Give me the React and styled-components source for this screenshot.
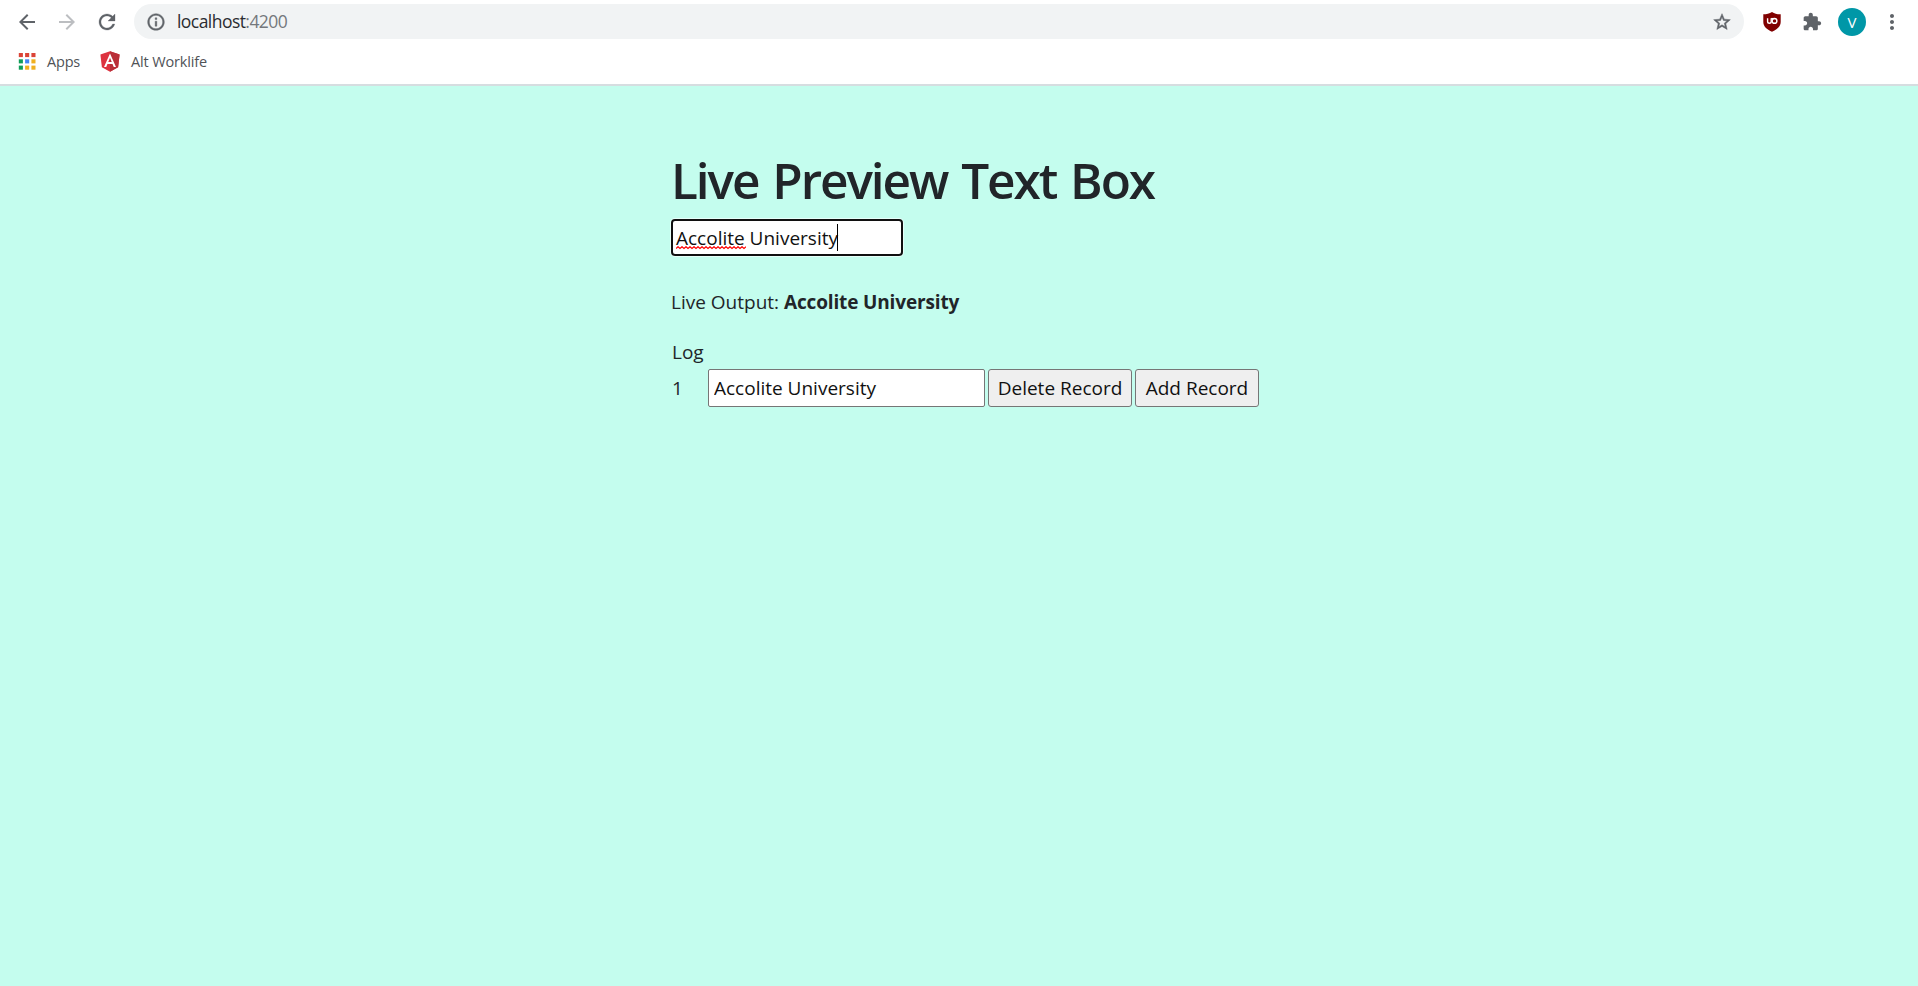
import React from "react";
import styled, { createGlobalStyle } from "styled-components";

const GlobalStyle = createGlobalStyle`
  * { box-sizing: border-box; }
  html, body { margin: 0; height: 100%; }
  body { background: #c4fdee; overflow: hidden; }
  #root { height: 100%; }
`;

const Window = styled.div`
  display: flex;
  flex-direction: column;
  height: 100%;
  font-family: "Open Sans", "Noto Sans", sans-serif;
  font-weight: 400;
  color: #212529;
`;

const Chrome = styled.header`
  flex: none;
  height: 86px;
  background: #fff;
  border-bottom: 2px solid #d6dde0;
`;

const Toolbar = styled.div`
  display: flex;
  align-items: center;
  height: 43px;
  padding: 0 14px;
`;

const IconSlot = styled.span`
  display: flex;
  align-items: center;
  justify-content: center;
  flex: none;
  width: ${(p) => p.$w || 40}px;
  height: 40px;
  color: ${(p) => p.$color || "#5f6368"};
  svg { display: block; }
`;

const AddressBar = styled.div`
  display: flex;
  align-items: center;
  width: 1610px;
  height: 35px;
  border-radius: 18px;
  background: #f1f3f4;
  padding: 0 12px;
`;

const Url = styled.span`
  flex: 1;
  margin-left: 11px;
  padding-bottom: 1px;
  font-size: 17.5px;
  line-height: 24px;
  letter-spacing: ${(p) => p.$spacing}px;
  color: #2b2c30;
`;

const Port = styled.span`
  color: #74787c;
`;

const Avatar = styled.span`
  display: flex;
  align-items: center;
  justify-content: center;
  width: 28px;
  height: 28px;
  border-radius: 50%;
  background: #0097a7;
  color: #fff;
  font-size: 15px;
  line-height: 20px;
`;

const Bookmarks = styled.nav`
  display: flex;
  align-items: center;
  height: 37px;
  padding-left: 18px;
`;

const Bookmark = styled.span`
  display: flex;
  align-items: center;
  gap: ${(p) => p.$gap}px;
  margin-right: 20px;
  font-size: 14.5px;
  line-height: 20px;
  letter-spacing: ${(p) => p.$spacing}px;
  color: #505357;
`;

const Main = styled.main`
  flex: 1;
  padding: 64px 0 0 671px;
  font-size: 19px;
  line-height: 30px;
`;

const Title = styled.h1`
  margin: 0;
  height: 69px;
  font-size: 49.5px;
  line-height: 60px;
  font-weight: 600;
  letter-spacing: ${(p) => p.$spacing}px;
  word-spacing: 3px;
  white-space: nowrap;
`;

const FocusedField = styled.div`
  position: relative;
  display: flex;
  align-items: center;
  width: 232px;
  height: 37px;
  padding-left: 3px;
  border: 2px solid #101010;
  border-radius: 4px;
  background: #fff;
  box-shadow: 0 0 0 1px #e6fff9;
  color: #111;
  letter-spacing: ${(p) => p.$spacing}px;
  white-space: nowrap;
`;

const Caret = styled.span`
  width: 1px;
  height: 27px;
  margin: 0 0 1px -1px;
  background: #000;
`;

const Squiggle = styled.svg`
  position: absolute;
  left: 3px;
  top: 25px;
`;

const Output = styled.p`
  margin: 31px 0 0;
  height: 50px;
  letter-spacing: ${(p) => p.$spacing}px;
`;

const Strong = styled.strong`
  font-weight: 700;
  letter-spacing: ${(p) => p.$spacing}px;
`;

const LogLabel = styled.div`
  height: 32px;
  padding-left: 1px;
`;

const LogRow = styled.div`
  display: flex;
  align-items: center;
  gap: 3px;
  height: 38px;
`;

const Index = styled.span`
  width: 34px;
  padding-left: 1px;
`;

const LogInput = styled.input`
  width: 277px;
  height: 38px;
  padding: 1px 4px 1px 5px;
  border: 1px solid #767676;
  border-radius: 2px;
  background: #fff;
  color: #111;
  font: inherit;
  letter-spacing: ${(p) => p.$spacing}px;
  outline: none;
`;

const Button = styled.button`
  width: ${(p) => p.$w}px;
  height: 38px;
  padding: 0;
  border: 1px solid #767676;
  border-radius: 3px;
  background: #efefef;
  color: #111;
  font: inherit;
  letter-spacing: ${(p) => p.$spacing}px;
  white-space: nowrap;
`;

const Glyph = ({ d, size = 24, weight = 0 }) => (
  <svg width={size} height={size} viewBox="0 0 24 24" fill="currentColor" stroke="currentColor" strokeWidth={weight}>
    <path d={d} />
  </svg>
);

const BACK = "M20 11H7.83l5.59-5.59L12 4l-8 8 8 8 1.41-1.41L7.83 13H20v-2z";
const FORWARD = "M12 4l-1.41 1.41L16.17 11H4v2h12.17l-5.58 5.59L12 20l8-8z";
const RELOAD =
  "M17.65 6.35C16.2 4.9 14.21 4 12 4c-4.42 0-7.99 3.58-7.99 8s3.57 8 7.99 8c3.73 0 6.84-2.55 7.73-6h-2.08c-.82 2.33-3.04 4-5.65 4-3.31 0-6-2.69-6-6s2.69-6 6-6c1.66 0 3.14.69 4.22 1.78L13 11h7V4l-2.35 2.35z";
const INFO =
  "M11 7h2v2h-2zm0 4h2v6h-2zm1-9C6.48 2 2 6.48 2 12s4.48 10 10 10 10-4.48 10-10S17.52 2 12 2zm0 18c-4.41 0-8-3.59-8-8s3.59-8 8-8 8 3.59 8 8-3.59 8-8 8z";
const STAR =
  "M22 9.24l-7.19-.62L12 2 9.19 8.63 2 9.24l5.46 4.73L5.82 21 12 17.27 18.18 21l-1.63-7.03L22 9.24zM12 15.4l-3.76 2.27 1-4.28-3.32-2.88 4.38-.38L12 6.1l1.71 4.04 4.38.38-3.32 2.88 1 4.28L12 15.4z";
const PUZZLE =
  "M20.5 11H19V7c0-1.1-.9-2-2-2h-4V3.5C13 2.12 11.88 1 10.5 1S8 2.12 8 3.5V5H4c-1.1 0-1.99.9-1.99 2v3.8H3.5c1.49 0 2.7 1.21 2.7 2.7s-1.21 2.7-2.7 2.7H2V20c0 1.1.9 2 2 2h3.8v-1.5c0-1.49 1.21-2.7 2.7-2.7s2.7 1.21 2.7 2.7V22H17c1.1 0 2-.9 2-2v-4h1.5c1.38 0 2.5-1.12 2.5-2.5S21.88 11 20.5 11z";
const MORE =
  "M12 8c1.1 0 2-.9 2-2s-.9-2-2-2-2 .9-2 2 .9 2 2 2zm0 2c-1.1 0-2 .9-2 2s.9 2 2 2 2-.9 2-2-.9-2-2-2zm0 6c-1.1 0-2 .9-2 2s.9 2 2 2 2-.9 2-2-.9-2-2-2z";

const ShieldIcon = () => (
  <svg width="18" height="20" viewBox="0 0 18 20">
    <path d="M9 0C6.5 1.8 3.5 2.3.3 2.3V10c0 5 4.2 7.6 8.7 9.8 4.5-2.2 8.7-4.8 8.7-9.8V2.3C14.5 2.3 11.5 1.8 9 0z" fill="#800000" />
    <path d="M4.6 6.2v3.3c0 1.1.7 1.8 1.8 1.8s1.8-.7 1.8-1.8V6.2" fill="none" stroke="#fff" strokeWidth="1.4" />
    <circle cx="11.5" cy="8.9" r="2.4" fill="none" stroke="#fff" strokeWidth="1.4" />
    <path d="M8.2 6.6h3.3" stroke="#fff" strokeWidth="1.3" />
  </svg>
);

const GRID = ["#db4437", "#db4437", "#db4437", "#0f9d58", "#4285f4", "#f0b020", "#0f9d58", "#f0b020", "#f0b020"];

const AppsIcon = () => (
  <svg width="18" height="17" viewBox="0 0 18 17">
    {GRID.map((fill, i) => (
      <rect key={i} x={(i % 3) * 6.3 + 0.8} y={Math.floor(i / 3) * 6.3} width="4.1" height="4.1" fill={fill} />
    ))}
  </svg>
);

const AngularIcon = () => (
  <svg width="20" height="21" viewBox="30 28 190 204">
    <path d="M125 30 31.9 63.2l14.2 123.1L125 230l78.9-43.7 14.2-123.1z" fill="#dd3340" />
    <path d="M125 30v200l78.9-43.7 14.2-123.1z" fill="#b92f38" />
    <path
      d="M125 52.1 66.8 182.6h21.7l11.7-29.2h49.4l11.7 29.2H183L125 52.1zm17 83.3h-34l17-40.9 17 40.9z"
      fill="#fff"
    />
  </svg>
);

const SpellingMark = ({ width }) => {
  let d = "M0 2.5";
  for (let x = 2; x <= width; x += 2) d += `L${x} ${x % 4 ? 0.7 : 2.5}`;
  return (
    <Squiggle width={width} height="4">
      <path d={d} fill="none" stroke="#f00" strokeWidth="1.2" />
    </Squiggle>
  );
};

export default function App() {
  return (
    <Window>
      <GlobalStyle />
      <Chrome>
        <Toolbar>
          <IconSlot $w={25}><Glyph d={BACK} /></IconSlot>
          <IconSlot $w={55} $color="#bcbec1"><Glyph d={FORWARD} /></IconSlot>
          <IconSlot $w={26}><Glyph d={RELOAD} weight={0.3} /></IconSlot>
          <IconSlot $w={14} />
          <AddressBar>
            <IconSlot $w={20}><Glyph d={INFO} size={20} weight={0.5} /></IconSlot>
            <Url $spacing={-0.55}>localhost<Port>:4200</Port></Url>
            <IconSlot $w={20}><Glyph d={STAR} size={20} weight={0.6} /></IconSlot>
          </AddressBar>
          <IconSlot $w={55}><ShieldIcon /></IconSlot>
          <IconSlot $w={26}><Glyph d={PUZZLE} size={20} /></IconSlot>
          <IconSlot $w={54}><Avatar>V</Avatar></IconSlot>
          <IconSlot $w={25}><Glyph d={MORE} /></IconSlot>
        </Toolbar>
        <Bookmarks>
          <Bookmark $gap={11} $spacing={-0.2}><AppsIcon />Apps</Bookmark>
          <Bookmark $gap={11} $spacing={-0.15}><AngularIcon />Alt Worklife</Bookmark>
        </Bookmarks>
      </Chrome>
      <Main>
        <Title $spacing={-2.05}>Live Preview Text Box</Title>
        <FocusedField $spacing={0}>
          Accolite University
          <Caret />
          <SpellingMark width={70} />
        </FocusedField>
        <Output $spacing={0}>
          Live Output: <Strong $spacing={-0.15}>Accolite University</Strong>
        </Output>
        <LogLabel>Log</LogLabel>
        <LogRow>
          <Index>1</Index>
          <LogInput $spacing={0} defaultValue="Accolite University" spellCheck={false} />
          <Button $w={144} $spacing={0}>Delete Record</Button>
          <Button $w={124} $spacing={0}>Add Record</Button>
        </LogRow>
      </Main>
    </Window>
  );
}
